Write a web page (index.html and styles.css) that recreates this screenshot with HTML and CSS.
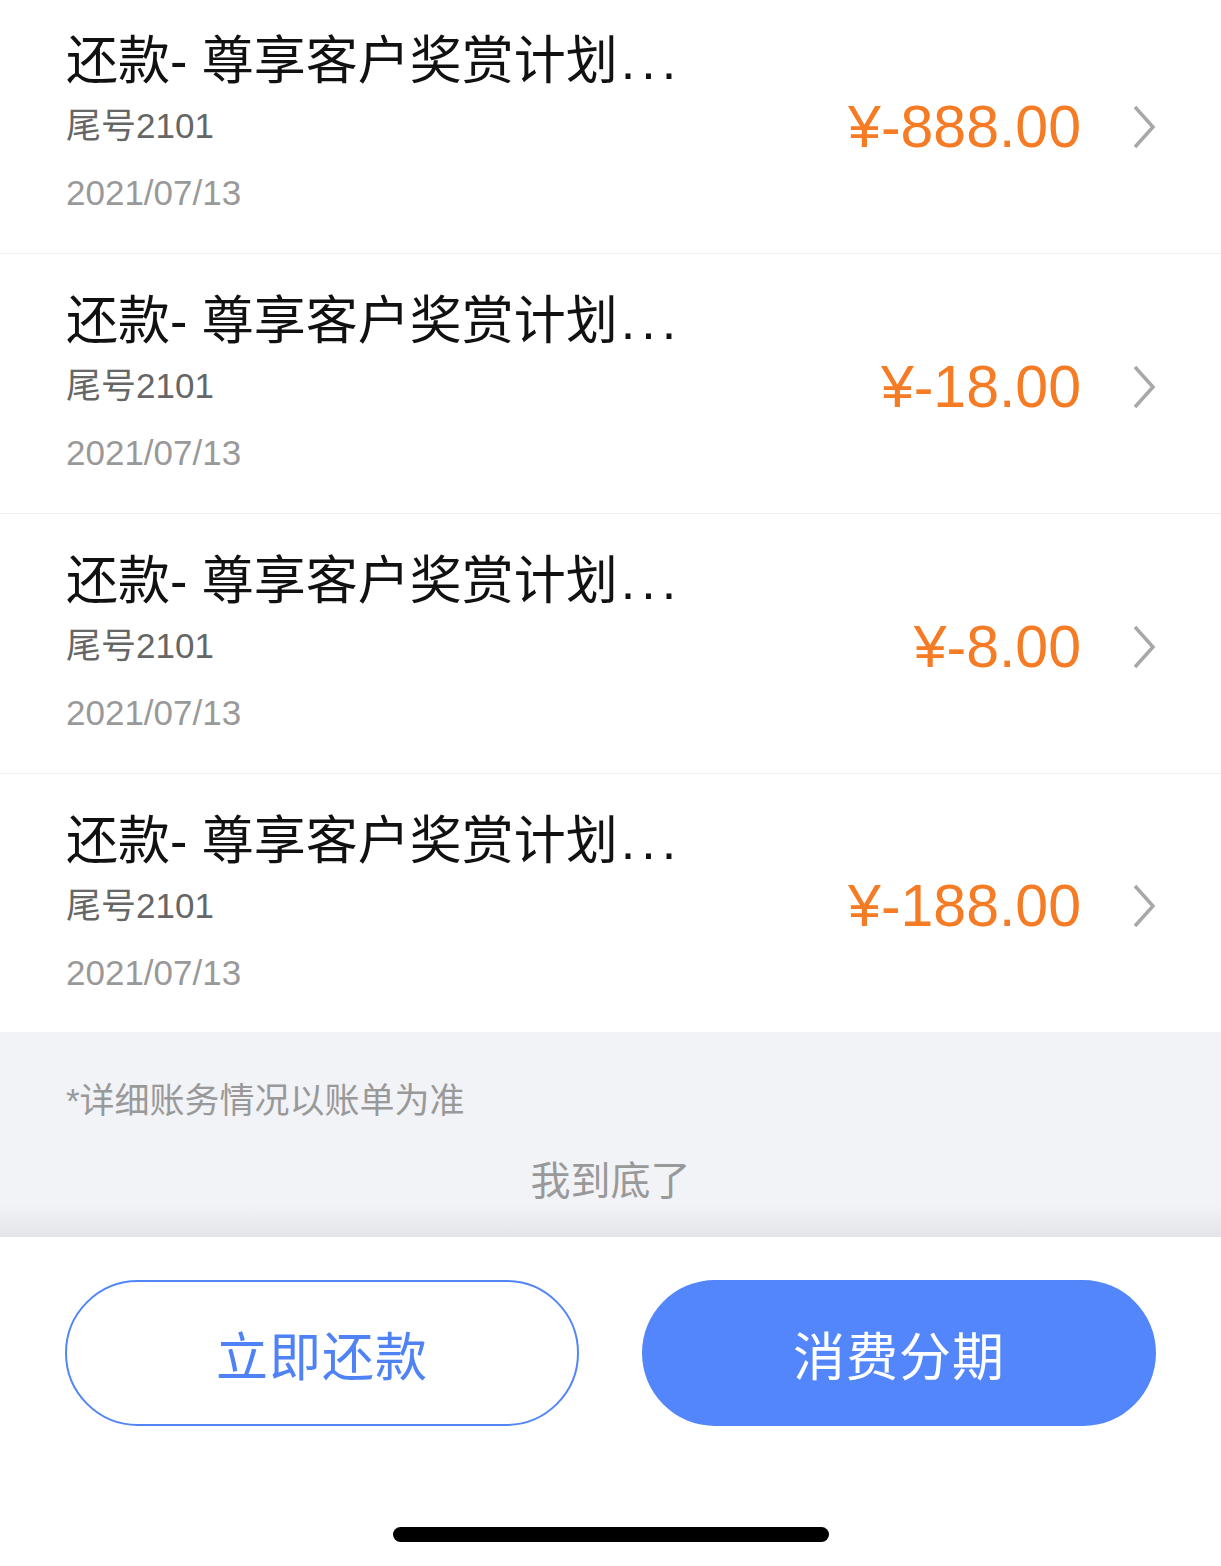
FILE: index.html
```html
<!DOCTYPE html>
<html lang="zh-CN">
<head>
  <meta charset="UTF-8">
  <meta name="viewport" content="width=device-width, initial-scale=1.0">
  <title>还款记录</title>
  <link rel="stylesheet" href="styles.css">
</head>
<body>

  <div class="page">
    <div class="list">
      <div class="item">
        <div class="info">
          <div class="title">还款- 尊享客户奖赏计划<span class="dots">...</span></div>
          <div class="card">尾号2101</div>
          <div class="date">2021/07/13</div>
        </div>
        <div class="amount">¥-888.00</div>
        <svg class="arrow" viewBox="0 0 24 46"><path d="M3 3 L21 23 L3 43" /></svg>
      </div>

      <div class="item">
        <div class="info">
          <div class="title">还款- 尊享客户奖赏计划<span class="dots">...</span></div>
          <div class="card">尾号2101</div>
          <div class="date">2021/07/13</div>
        </div>
        <div class="amount">¥-18.00</div>
        <svg class="arrow" viewBox="0 0 24 46"><path d="M3 3 L21 23 L3 43" /></svg>
      </div>

      <div class="item">
        <div class="info">
          <div class="title">还款- 尊享客户奖赏计划<span class="dots">...</span></div>
          <div class="card">尾号2101</div>
          <div class="date">2021/07/13</div>
        </div>
        <div class="amount">¥-8.00</div>
        <svg class="arrow" viewBox="0 0 24 46"><path d="M3 3 L21 23 L3 43" /></svg>
      </div>

      <div class="item">
        <div class="info">
          <div class="title">还款- 尊享客户奖赏计划<span class="dots">...</span></div>
          <div class="card">尾号2101</div>
          <div class="date">2021/07/13</div>
        </div>
        <div class="amount">¥-188.00</div>
        <svg class="arrow" viewBox="0 0 24 46"><path d="M3 3 L21 23 L3 43" /></svg>
      </div>
    </div>

    <div class="footer">
      <p class="note">*详细账务情况以账单为准</p>
      <p class="end">我到底了</p>
    </div>

    <div class="actions">
      <div class="buttons">
        <button class="btn btn-outline">立即还款</button>
        <button class="btn btn-primary">消费分期</button>
      </div>
      <div class="home-bar"></div>
    </div>
  </div>

</body>
</html>
```

FILE: styles.css
```css
body {
  margin: 0;
  background-color: #fff;
  font-family: "Liberation Sans", "Noto Sans CJK SC", sans-serif;
}

.page {
  width: 1221px;
  height: 1566px;
  overflow: hidden;
  display: flex;
  flex-direction: column;
}

/* the first row is scrolled a little under the top edge */
.list {
  margin-top: -6px;
}

.item {
  height: 260px;
  box-sizing: border-box;
  border-bottom: 1px solid #f1f1f3;
  padding: 0 65px 0 66px;
  display: flex;
  align-items: center;
}

.item:last-child {
  height: 259px;
}

.info {
  flex: 1;
  align-self: flex-start;
  padding-top: 37px;
}

.title {
  font-size: 52px;
  line-height: 60px;
  color: #111;
}

.dots {
  letter-spacing: 6px;
  margin-left: 3px;
}

.card {
  font-size: 35px;
  line-height: 40px;
  margin-top: 15px;
  color: #666;
}

.date {
  font-size: 35px;
  line-height: 40px;
  margin-top: 27px;
  color: #999;
}

.amount {
  font-size: 59px;
  color: #f57b24;
  margin-top: 6px;
}

.arrow {
  width: 24px;
  height: 46px;
  margin-left: 51px;
  margin-top: 6px;
  fill: none;
  stroke: #a8a8a8;
  stroke-width: 3.5;
}

.footer {
  height: 204px;
  box-sizing: border-box;
  background: linear-gradient(to bottom, #f2f3f7 84%, #e4e5e9 100%);
  padding: 48px 66px 0;
  color: #999;
}

.note {
  margin: 0;
  font-size: 35px;
  line-height: 40px;
}

.end {
  margin: 38px 0 0;
  font-size: 40px;
  line-height: 44px;
  text-align: center;
}

.actions {
  flex: 1;
  display: flex;
  flex-direction: column;
  align-items: center;
  padding-top: 43px;
}

.buttons {
  display: flex;
  gap: 63px;
}

.btn {
  width: 514px;
  height: 146px;
  border-radius: 73px;
  font-family: "Noto Sans CJK SC", sans-serif;
  font-size: 52px;
  letter-spacing: 1px;
  cursor: pointer;
}

.btn-outline {
  background-color: #fff;
  border: 2px solid #5286f7;
  color: #4f82f5;
}

.btn-primary {
  background-color: #5386fb;
  border: none;
  color: #fff;
}

.home-bar {
  width: 436px;
  height: 15px;
  border-radius: 8px;
  background-color: #000;
  margin-top: 101px;
}
```
